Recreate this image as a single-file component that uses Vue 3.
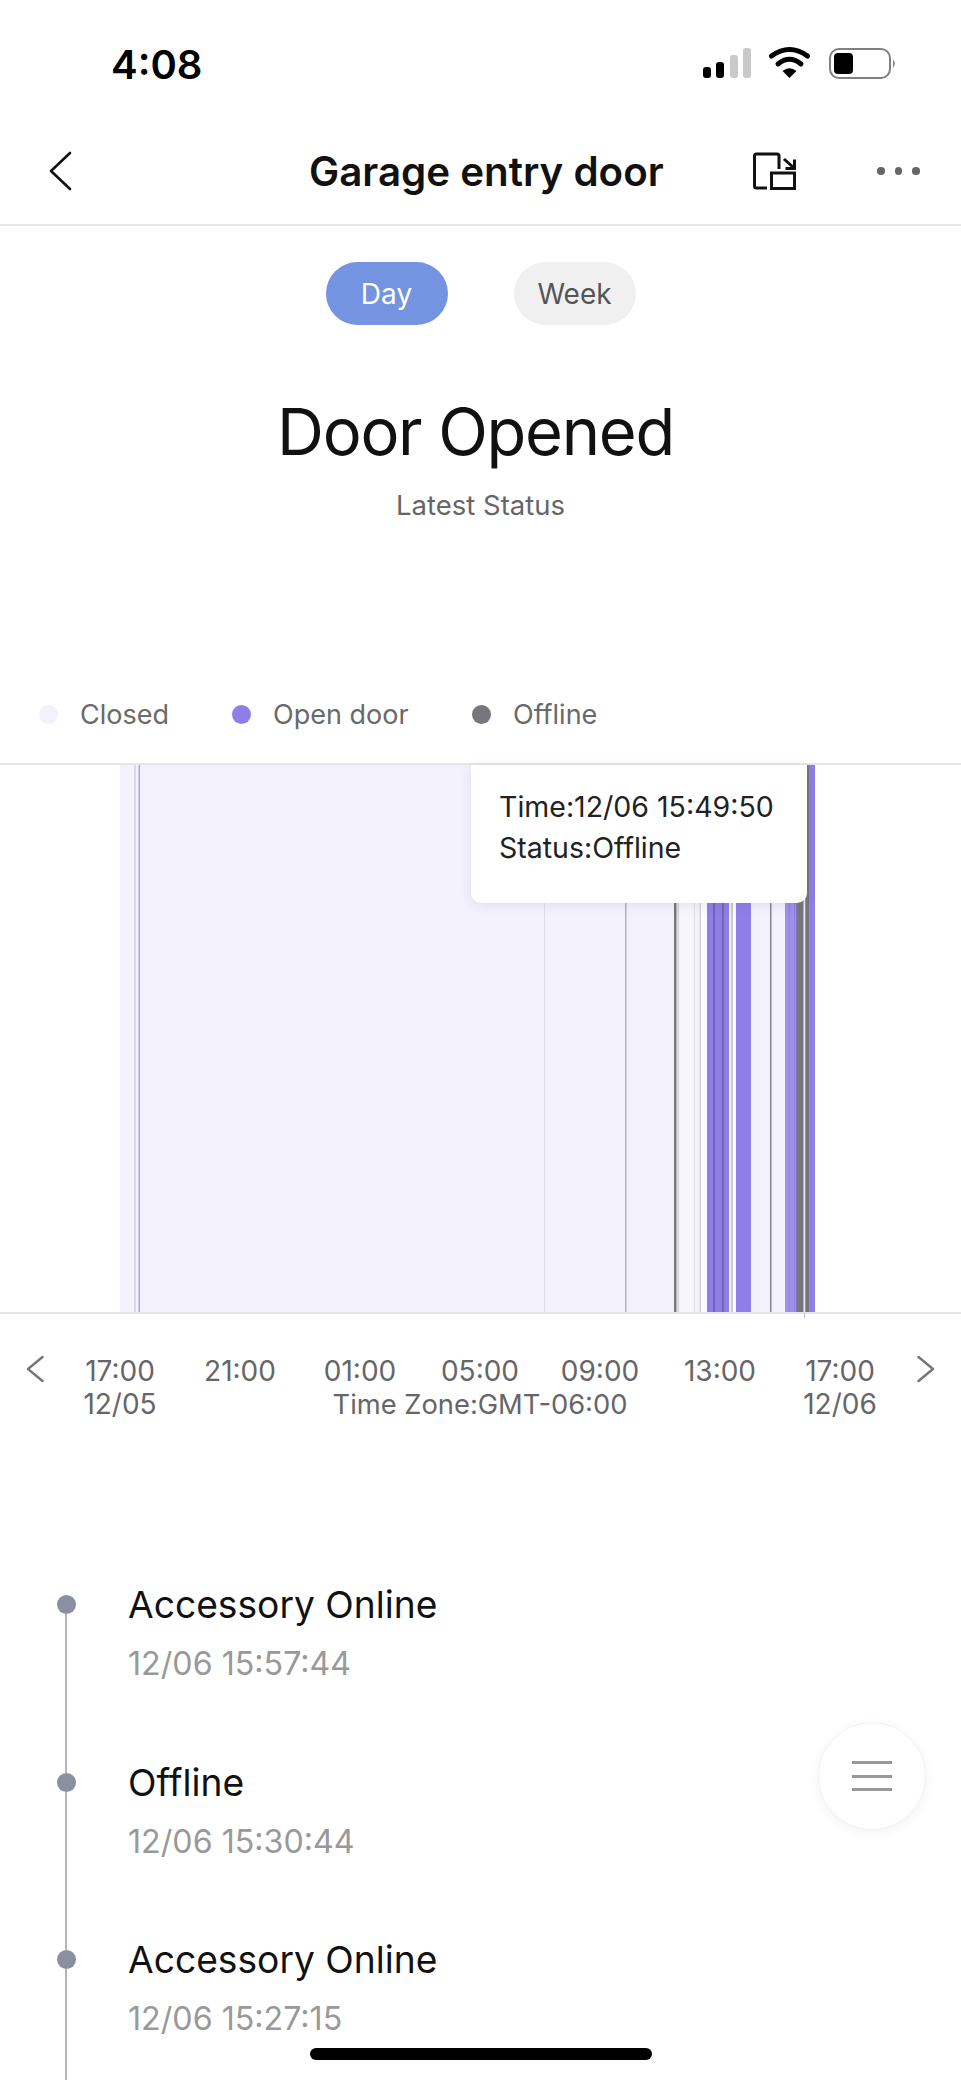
<script setup>
const closed = '#f3f1fc'
const purple = '#8f7de8'
const dark = '#77767f'
const bars = [
  [120, 695, closed],
  [134, 2, '#d9d5f3'],
  [138.5, 1.5, '#a9a5d9'],
  [544, 1, '#dedde9'],
  [600, 25, '#f4f2fd'],
  [625, 1.5, '#b0afbc'],
  [674, 2.5, dark],
  [677.5, 1.5, '#cfcfd3'],
  [679, 14, '#f6f5fd'],
  [694, 1, '#e3e2ea'],
  [699.5, 1.5, '#d3d2dc'],
  [701, 6, '#fbfaff'],
  [707, 22, purple],
  [713, 2, '#6f6aa8'],
  [722, 2, '#6f6aa8'],
  [729, 2, '#f4f2fc'],
  [731, 2, '#c9c9ce'],
  [733, 3, '#fbfbff'],
  [736, 15, purple],
  [770, 1.5, '#88878f'],
  [785, 11, '#9f90ec'],
  [789, 1, purple],
  [794, 1, purple],
  [796, 19, purple],
  [796.5, 7, dark],
  [803.5, 2, '#e9e9ec'],
  [805.5, 3.5, dark]
].map(([x, w, fill]) => ({ x, w, fill }))

const legend = [
  { label: 'Closed', color: closed, width: 193 },
  { label: 'Open door', color: purple, width: 240 },
  { label: 'Offline', color: dark, width: 125 }
]
const times = ['17:00', '21:00', '01:00', '05:00', '09:00', '13:00', '17:00']
const events = [
  { title: 'Accessory Online', time: '12/06 15:57:44' },
  { title: 'Offline', time: '12/06 15:30:44' },
  { title: 'Accessory Online', time: '12/06 15:27:15' }
]
</script>

<template>
  <div class="page">
    <header class="status">
      <span class="clock">4:08</span>
      <svg class="status-icons" width="200" height="40" viewBox="700 44 200 40">
        <rect x="703" y="67" width="8" height="11" rx="3" fill="#000" />
        <rect x="716" y="62" width="8" height="16" rx="3" fill="#000" />
        <rect x="730" y="55" width="8" height="23" rx="3" fill="#c9c9c9" />
        <rect x="743" y="48" width="8" height="30" rx="3" fill="#c9c9c9" />
        <path d="M771.5 56 Q789.5 43 807.5 56" fill="none" stroke="#000" stroke-width="5" stroke-linecap="round" />
        <path d="M778 64 Q789.5 54.5 801 64" fill="none" stroke="#000" stroke-width="5" stroke-linecap="round" />
        <path d="M782.5 71 Q789.5 65.5 796.5 71 L789.5 78 Z" fill="#000" />
        <rect x="830" y="49" width="60" height="29" rx="9" fill="none" stroke="#808080" stroke-width="2" />
        <rect x="834" y="53" width="19" height="21" rx="4" fill="#000" />
        <path d="M893 59.5 Q896.5 63.5 893 68 Z" fill="#808080" />
      </svg>
    </header>

    <nav class="nav">
      <svg class="back" width="24" height="40" viewBox="0 0 24 40">
        <path d="M22 2 L3 20 L22 38" fill="none" stroke="#111" stroke-width="2.6" stroke-linecap="round" stroke-linejoin="round" />
      </svg>
      <h1 class="title">Garage entry door</h1>
      <svg class="rotate" width="44" height="38" viewBox="0 0 44 38">
        <path d="M14 36 H3.5 Q1.5 36 1.5 34 V4 Q1.5 2 3.5 2 H24 Q26 2 26 4 V17" fill="none" stroke="#111" stroke-width="3" stroke-linejoin="round" />
        <rect x="18.5" y="21" width="23" height="15.5" fill="none" stroke="#111" stroke-width="3" />
        <path d="M31 7 L41 16 M41.5 7.5 V16.5 H32.5" fill="none" stroke="#111" stroke-width="3" />
      </svg>
      <div class="more"><i></i><i></i><i></i></div>
    </nav>

    <div class="tabs">
      <span class="tab active">Day</span>
      <span class="tab">Week</span>
    </div>

    <div class="headline">Door Opened</div>
    <div class="caption">Latest Status</div>

    <div class="legend">
      <div v-for="item in legend" :key="item.label" class="legend-item" :style="{ width: item.width + 'px' }">
        <i class="legend-dot" :style="{ background: item.color }"></i>
        <span>{{ item.label }}</span>
      </div>
    </div>

    <section class="chart">
      <svg class="bars" width="961" height="547" viewBox="0 0 961 547" preserveAspectRatio="none">
        <rect v-for="(b, i) in bars" :key="i" :x="b.x" y="0" :width="b.w" height="547" :fill="b.fill" />
      </svg>
      <div class="tick"></div>
      <div class="tooltip">
        <div>Time:12/06 15:49:50</div>
        <div>Status:Offline</div>
      </div>
    </section>

    <section class="axis">
      <svg class="axis-arrow" width="18" height="28" viewBox="0 0 18 28">
        <path d="M16.5 2 L2 14 L16.5 26" fill="none" stroke="#777" stroke-width="2.4" stroke-linecap="round" stroke-linejoin="round" />
      </svg>
      <div class="axis-grid">
        <span v-for="(t, i) in times" :key="i">{{ t }}</span>
        <span>12/05</span>
        <span class="zone">Time Zone:GMT-06:00</span>
        <span>12/06</span>
      </div>
      <svg class="axis-arrow right" width="18" height="28" viewBox="0 0 18 28">
        <path d="M1.5 2 L16 14 L1.5 26" fill="none" stroke="#777" stroke-width="2.4" stroke-linecap="round" stroke-linejoin="round" />
      </svg>
    </section>

    <section class="timeline">
      <article v-for="(e, i) in events" :key="i" class="event">
        <div class="marker">
          <i class="rail-top" :class="{ hidden: i === 0 }"></i>
          <i class="dot"></i>
          <i class="rail"></i>
        </div>
        <div class="event-body">
          <div class="event-title">{{ e.title }}</div>
          <div class="event-time">{{ e.time }}</div>
        </div>
      </article>
    </section>

    <button class="fab" type="button" aria-label="Menu"><i></i><i></i><i></i></button>
    <div class="home"></div>
  </div>
</template>

<style scoped>
.page {
  position: relative;
  width: 961px;
  height: 2080px;
  overflow: hidden;
  background: #fff;
  font-family: Inter, "Liberation Sans", sans-serif;
  display: flex;
  flex-direction: column;
}
i { display: block; }
.status {
  height: 128px;
  flex: none;
  display: flex;
  align-items: center;
  justify-content: space-between;
  padding: 0 61px 0 111px;
  box-sizing: border-box;
}
.clock { font-size: 40px; font-weight: 600; color: #000; }
.status-icons { display: block; }
.nav {
  height: 98px;
  flex: none;
  box-sizing: border-box;
  border-bottom: 2px solid #e8e8e8;
  padding-bottom: 10px;
  display: flex;
  align-items: center;
  position: relative;
}
.back { margin-left: 48px; flex: none; }
.title {
  margin: 0;
  width: 354px;
  margin-left: 237px;
  text-align: center;
  font-size: 40.3px;
  font-weight: 600;
  color: #111;
  white-space: nowrap;
}
.rotate { margin-left: 90px; flex: none; }
.more { display: flex; gap: 10px; margin-left: 80px; }
.more i { width: 7.5px; height: 7.5px; border-radius: 50%; background: #666; }
.tabs {
  flex: none;
  display: flex;
  justify-content: center;
  gap: 66px;
  margin-top: 36px;
}
.tab {
  width: 122px;
  height: 63px;
  border-radius: 32px;
  background: #f0f0f0;
  color: #555;
  font-size: 28px;
  display: flex;
  align-items: center;
  justify-content: center;
}
.tab.active { background: #7493e0; color: #fff; }
.headline {
  flex: none;
  margin-top: 67px;
  height: 80px;
  line-height: 80px;
  padding-right: 10px;
  text-align: center;
  font-size: 65px;
  letter-spacing: -1.3px;
  color: #111;
}
.caption {
  flex: none;
  margin-top: 13px;
  height: 40px;
  line-height: 40px;
  text-align: center;
  font-size: 27.5px;
  color: #666;
}
.legend {
  flex: none;
  margin-top: 169px;
  height: 40px;
  padding-left: 39px;
  display: flex;
  align-items: center;
  font-size: 27px;
  color: #6a6a6a;
}
.legend-item { display: flex; align-items: center; gap: 22px; flex: none; }
.legend-dot { width: 19px; height: 19px; border-radius: 50%; flex: none; }
.chart {
  flex: none;
  margin-top: 29px;
  height: 551px;
  box-sizing: border-box;
  border-top: 2px solid #e6e6e6;
  border-bottom: 2px solid #e6e6e6;
  position: relative;
}
.bars { display: block; }
.tick {
  position: absolute;
  left: 804px;
  bottom: -6px;
  width: 1px;
  height: 5px;
  background: #bbb;
}
.tooltip {
  position: absolute;
  left: 471px;
  top: 0;
  width: 336px;
  height: 138px;
  box-sizing: border-box;
  padding: 21px 0 0 28px;
  background: #fff;
  border-radius: 0 0 10px 10px;
  box-shadow: 0 2px 12px rgba(60, 60, 80, 0.1);
  font-size: 28.5px;
  line-height: 41px;
  color: #222;
  white-space: nowrap;
}
.axis {
  flex: none;
  margin-top: 41px;
  display: flex;
  align-items: flex-start;
  color: #666;
  font-size: 28px;
  line-height: 33px;
}
.axis-arrow { flex: none; margin: 0 0 0 26px; }
.axis-arrow.right { margin: 0 0 0 17px; }
.axis-grid {
  flex: none;
  margin-left: 16px;
  width: 840px;
  display: grid;
  grid-template-columns: repeat(7, 120px);
  text-align: center;
  white-space: nowrap;
}
.zone { grid-column: 2 / span 5; font-size: 27.3px; }
.timeline { flex: none; margin-top: 162px; }
.event { display: flex; height: 177.5px; }
.marker {
  flex: none;
  width: 19px;
  margin-left: 56.5px;
  display: flex;
  flex-direction: column;
  align-items: center;
}
.rail-top { width: 2px; height: 12px; background: #b4b6be; }
.rail-top.hidden { visibility: hidden; }
.dot { width: 19px; height: 19px; border-radius: 50%; background: #8a90a0; flex: none; }
.rail { width: 2px; flex: 1; background: #b4b6be; }
.event-body { margin-left: 52.5px; }
.event-title { font-size: 37.2px; line-height: 44px; color: #111; }
.event-time { margin-top: 17px; font-size: 32.2px; line-height: 40px; color: #999; }
.fab {
  position: absolute;
  left: 818px;
  top: 1722px;
  width: 108px;
  height: 108px;
  padding: 0;
  border-radius: 50%;
  border: 1px solid #f2f2f2;
  background: #fff;
  box-shadow: 0 3px 12px rgba(0, 0, 0, 0.05);
  display: flex;
  flex-direction: column;
  align-items: center;
  justify-content: center;
  gap: 10.5px;
}
.fab i { width: 40px; height: 3px; background: #999; }
.home {
  position: absolute;
  left: 310px;
  top: 2048px;
  width: 342px;
  height: 12px;
  border-radius: 6px;
  background: #000;
}
</style>
